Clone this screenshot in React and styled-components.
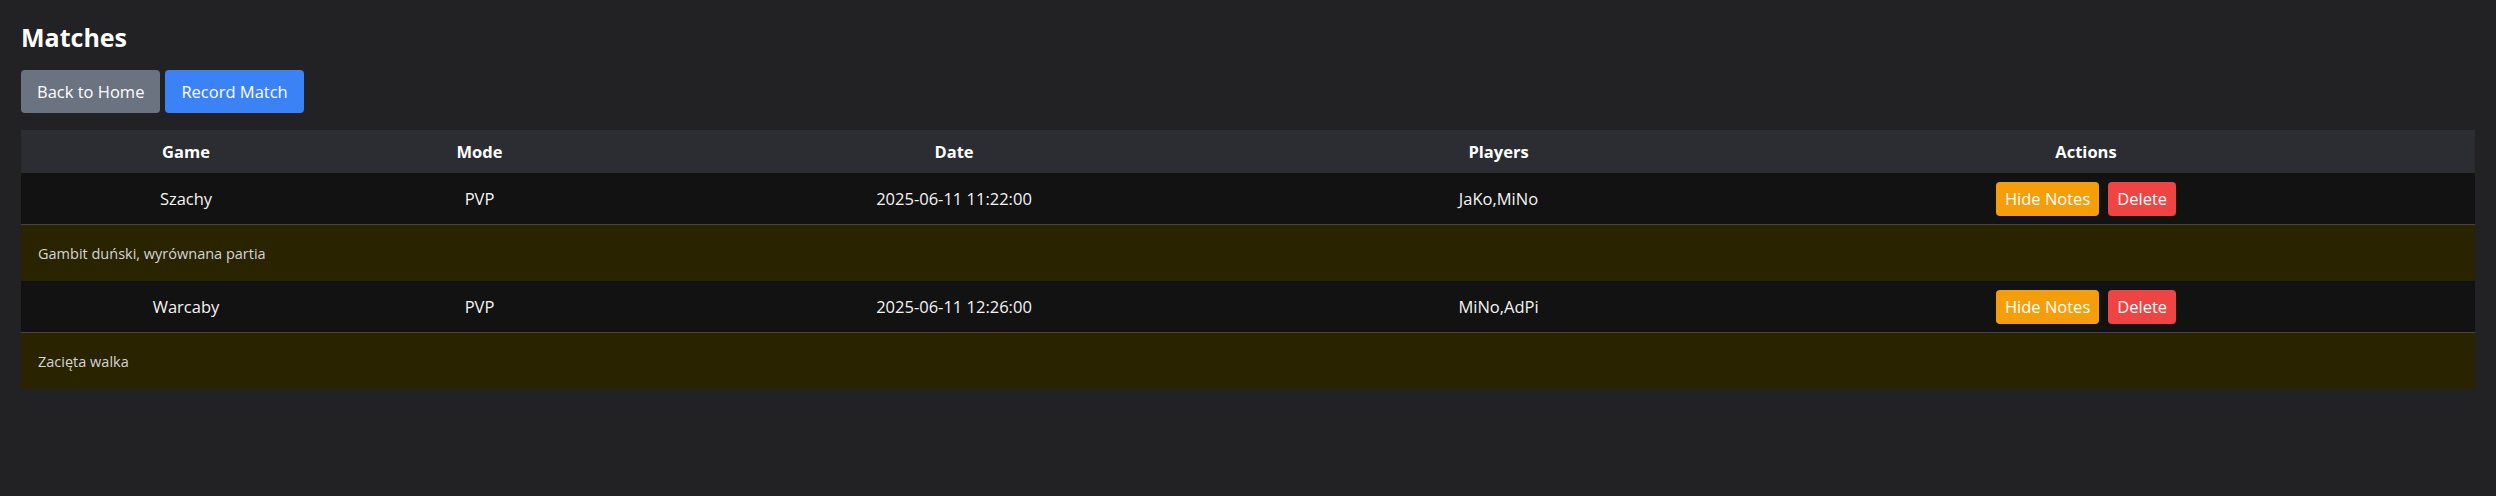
import React from "react"
import styled, { createGlobalStyle } from "styled-components"

const GlobalStyle = createGlobalStyle`
  body {
    margin: 0;
    background: #222225;
    color: #f2f2f2;
    font-family: "Open Sans", "Noto Sans", sans-serif;
  }
`

const Page = styled.div`
  padding: 22px 21px 40px;
`

const Title = styled.h1`
  margin: 0;
  font-size: 25px;
  line-height: 30px;
  font-weight: 700;
  color: #ffffff;
`

const Toolbar = styled.div`
  display: flex;
  gap: 5px;
  margin-top: 18px;
`

const Button = styled.button`
  display: inline-flex;
  align-items: center;
  justify-content: center;
  height: 43px;
  padding: 0 16px;
  border: none;
  border-radius: 4px;
  font-family: inherit;
  font-size: 16.5px;
  color: #ffffff;
  background: ${(p) => p.bg};
  cursor: pointer;
`

const Table = styled.table`
  width: 100%;
  margin-top: 17px;
  border-collapse: collapse;
  table-layout: fixed;
`

const HeadCell = styled.th`
  height: 43px;
  padding: 0 8px;
  background: #2c2d32;
  font-size: 16.5px;
  font-weight: 700;
  color: #ffffff;
  text-align: center;
`

const Row = styled.tr`
  background: #121212;
  border-bottom: 1px solid #444446;
`

const Cell = styled.td`
  height: 51px;
  padding: 0 8px;
  font-size: 16.5px;
  color: #f4f4f4;
  text-align: center;
`

const NotesRow = styled.tr`
  background: #2a2300;
`

const NotesCell = styled.td`
  height: 56px;
  padding: 0 17px;
  font-size: 14.5px;
  color: #d4d4d8;
  text-align: left;
`

const Actions = styled.div`
  display: inline-flex;
  gap: 9px;
`

const SmallButton = styled.button`
  height: 34px;
  padding: 0 9px;
  border: none;
  border-radius: 4px;
  font-family: inherit;
  font-size: 16.5px;
  color: #ffffff;
  background: ${(p) => p.bg};
  cursor: pointer;
`

const matches = [
  {
    game: "Szachy",
    mode: "PVP",
    date: "2025-06-11 11:22:00",
    players: "JaKo,MiNo",
    notes: "Gambit duński, wyrównana partia",
  },
  {
    game: "Warcaby",
    mode: "PVP",
    date: "2025-06-11 12:26:00",
    players: "MiNo,AdPi",
    notes: "Zacięta walka",
  },
]

const App = () => (
  <Page>
    <GlobalStyle />
    <Title>Matches</Title>
    <Toolbar>
      <Button bg="#6b7280">Back to Home</Button>
      <Button bg="#3b82f6">Record Match</Button>
    </Toolbar>
    <Table>
      <colgroup>
        <col style={{ width: 330 }} />
        <col style={{ width: 257 }} />
        <col style={{ width: 692 }} />
        <col style={{ width: 397 }} />
        <col />
      </colgroup>
      <thead>
        <tr>
          <HeadCell>Game</HeadCell>
          <HeadCell>Mode</HeadCell>
          <HeadCell>Date</HeadCell>
          <HeadCell>Players</HeadCell>
          <HeadCell>Actions</HeadCell>
        </tr>
      </thead>
      <tbody>
        {matches.map((m) => (
          <React.Fragment key={m.date}>
            <Row>
              <Cell>{m.game}</Cell>
              <Cell>{m.mode}</Cell>
              <Cell>{m.date}</Cell>
              <Cell>{m.players}</Cell>
              <Cell>
                <Actions>
                  <SmallButton bg="#f59e0b">Hide Notes</SmallButton>
                  <SmallButton bg="#ef4444">Delete</SmallButton>
                </Actions>
              </Cell>
            </Row>
            <NotesRow>
              <NotesCell colSpan={5}>{m.notes}</NotesCell>
            </NotesRow>
          </React.Fragment>
        ))}
      </tbody>
    </Table>
  </Page>
)

export default App
